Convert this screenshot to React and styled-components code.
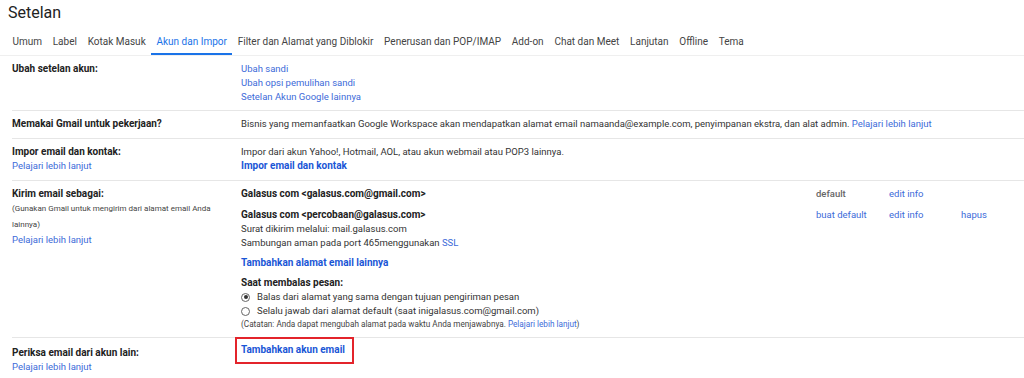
import React from "react";
import styled, { createGlobalStyle } from "styled-components";

const Global = createGlobalStyle`
  html, body { margin: 0; padding: 0; background: #fff; }
  body { font-family: Roboto, "Liberation Sans", Arial, sans-serif; color: #222; }
  * { box-sizing: border-box; }
`;

const Page = styled.div`
  width: 1024px;
  height: 378px;
  overflow: hidden;
  background: #fff;
`;

const Title = styled.h1`
  margin: 0;
  padding: 3px 0 0 8px;
  height: 30px;
  font-size: 16px;
  line-height: 20px;
  font-weight: 400;
  color: #222;
`;

const TabBar = styled.nav`
  display: flex;
  padding-left: 7px;
  height: 26px;
  border-bottom: 1px solid #efefef;
`;

const Tab = styled.div`
  padding: 0 5.4px;
  font-size: 10px;
  line-height: 24px;
  height: 25px;
  color: ${(p) => (p.$active ? "#1a73e8" : "#444")};
  border-bottom: 2px solid ${(p) => (p.$active ? "#1a73e8" : "transparent")};
  white-space: nowrap;
`;

const Row = styled.div`
  display: grid;
  grid-template-columns: 229px 1fr;
  margin-left: 12px;
  padding: ${(p) => p.$pad || "6px 0"};
  border-bottom: ${(p) => (p.$last ? "none" : "1px solid #e6e6e6")};
`;

const LabelCol = styled.div`
  display: flex;
  flex-direction: column;
`;

const Label = styled.div`
  font-size: 10px;
  font-weight: 700;
  line-height: 14px;
  color: #222;
`;

const SubNote = styled.div`
  font-size: 8px;
  line-height: 16px;
  color: #444;
  padding-right: 8px;
`;

const Content = styled.div`
  display: flex;
  flex-direction: column;
  font-size: 9.5px;
  line-height: 14px;
  color: #222;
`;

const Link = styled.a`
  color: ${(p) => (p.$bold ? "#1a56d6" : "#3d6bd9")};
  font-weight: ${(p) => (p.$bold ? 700 : 400)};
  text-decoration: none;
  font-size: ${(p) => (p.$bold ? "10px" : "9.5px")};
  line-height: 14px;
`;

const Text = styled.span`
  font-size: 9.5px;
  line-height: 14px;
  color: #333;
`;

const Accounts = styled.div`
  display: grid;
  grid-template-columns: 1fr 73px 72px 63px;
  row-gap: 7px;
  align-items: start;
`;

const Bold = styled.div`
  font-weight: 700;
  font-size: 10px;
  line-height: 14px;
  color: #222;
`;

const Muted = styled.div`
  font-weight: 500;
  color: #666;
  font-size: 9.5px;
  line-height: 14px;
`;

const Stack = styled.div`
  display: flex;
  flex-direction: column;
`;

const Spaced = styled.div`
  margin-top: ${(p) => p.$top || "0"};
  display: flex;
  flex-direction: column;
`;

const RadioRow = styled.label`
  display: flex;
  align-items: center;
  gap: 7px;
  font-size: 9.5px;
  line-height: 14px;
  color: #333;
`;

const Radio = styled.span`
  width: 9px;
  height: 9px;
  border-radius: 50%;
  border: 1px solid #666;
  display: inline-flex;
  align-items: center;
  justify-content: center;
  &::after {
    content: "";
    width: 4px;
    height: 4px;
    border-radius: 50%;
    background: ${(p) => (p.$checked ? "#333" : "transparent")};
  }
`;

const Note = styled.div`
  font-size: 8.2px;
  line-height: 13px;
  color: #444;
`;

const SmallLink = styled.a`
  color: #3d6bd9;
  text-decoration: none;
`;

const Highlight = styled.div`
  align-self: flex-start;
  border: 2px solid #e3242b;
  padding: 4px 7px 5px 4px;
  margin: -9px 0 0 -6px;
`;

const tabs = [
  "Umum",
  "Label",
  "Kotak Masuk",
  "Akun dan Impor",
  "Filter dan Alamat yang Diblokir",
  "Penerusan dan POP/IMAP",
  "Add-on",
  "Chat dan Meet",
  "Lanjutan",
  "Offline",
  "Tema",
];

export default function App() {
  return (
    <Page>
      <Global />
      <Title>Setelan</Title>
      <TabBar>
        {tabs.map((t) => (
          <Tab key={t} $active={t === "Akun dan Impor"}>
            {t}
          </Tab>
        ))}
      </TabBar>

      <Row>
        <LabelCol>
          <Label>Ubah setelan akun:</Label>
        </LabelCol>
        <Content>
          <Link>Ubah sandi</Link>
          <Link>Ubah opsi pemulihan sandi</Link>
          <Link>Setelan Akun Google lainnya</Link>
        </Content>
      </Row>

      <Row $pad="6px 0 7px">
        <LabelCol>
          <Label>Memakai Gmail untuk pekerjaan?</Label>
        </LabelCol>
        <Content>
          <Text>
            Bisnis yang memanfaatkan Google Workspace akan mendapatkan alamat email namaanda@example.com, penyimpanan ekstra, dan alat admin.{" "}
            <Link>Pelajari lebih lanjut</Link>
          </Text>
        </Content>
      </Row>

      <Row $pad="6px 0 7px">
        <LabelCol>
          <Label>Impor email dan kontak:</Label>
          <Link>Pelajari lebih lanjut</Link>
        </LabelCol>
        <Content>
          <Text>Impor dari akun Yahoo!, Hotmail, AOL, atau akun webmail atau POP3 lainnya.</Text>
          <Link $bold>Impor email dan kontak</Link>
        </Content>
      </Row>

      <Row $pad="6px 0 6px">
        <LabelCol>
          <Label>Kirim email sebagai:</Label>
          <SubNote>(Gunakan Gmail untuk mengirim dari alamat email Anda lainnya)</SubNote>
          <Link>Pelajari lebih lanjut</Link>
        </LabelCol>
        <Content>
          <Accounts>
            <Bold>Galasus com &lt;galasus.com@gmail.com&gt;</Bold>
            <Muted>default</Muted>
            <Link>edit info</Link>
            <span />
            <Stack>
              <Bold>Galasus com &lt;percobaan@galasus.com&gt;</Bold>
              <Text>Surat dikirim melalui: mail.galasus.com</Text>
              <Text>
                Sambungan aman pada port 465menggunakan <Link>SSL</Link>
              </Text>
            </Stack>
            <Link>buat default</Link>
            <Link>edit info</Link>
            <Link>hapus</Link>
          </Accounts>
          <Spaced $top="6px">
            <Link $bold>Tambahkan alamat email lainnya</Link>
          </Spaced>
          <Spaced $top="6px">
            <Bold>Saat membalas pesan:</Bold>
            <RadioRow>
              <Radio $checked />
              Balas dari alamat yang sama dengan tujuan pengiriman pesan
            </RadioRow>
            <RadioRow>
              <Radio />
              Selalu jawab dari alamat default (saat inigalasus.com@gmail.com)
            </RadioRow>
            <Note>
              (Catatan: Anda dapat mengubah alamat pada waktu Anda menjawabnya.{" "}
              <SmallLink>Pelajari lebih lanjut</SmallLink>)
            </Note>
          </Spaced>
        </Content>
      </Row>

      <Row $pad="8px 0 6px" $last>
        <LabelCol>
          <Label>Periksa email dari akun lain:</Label>
          <Link>Pelajari lebih lanjut</Link>
        </LabelCol>
        <Content>
          <Highlight>
            <Link $bold>Tambahkan akun email</Link>
          </Highlight>
        </Content>
      </Row>
    </Page>
  );
}
